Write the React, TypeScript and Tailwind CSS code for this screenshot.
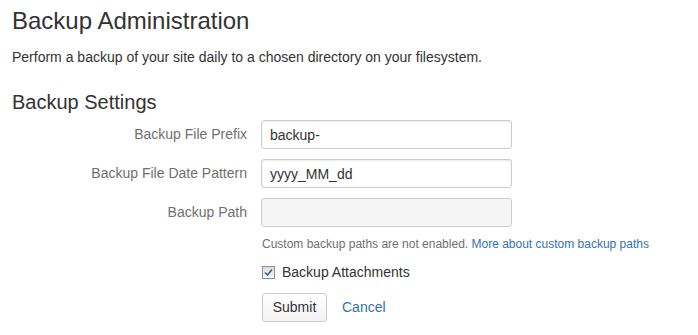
import { useState } from "react";

const fields = [
  { label: "Backup File Prefix", value: "backup-", disabled: false },
  { label: "Backup File Date Pattern", value: "yyyy_MM_dd", disabled: false },
  { label: "Backup Path", value: "", disabled: true },
];

export default function App() {
  const [attachments, setAttachments] = useState(true);

  return (
    <div className="w-[698px] h-[335px] bg-white px-3 pt-[6px] text-[#333] font-['Liberation_Sans',Arial,sans-serif]">
      <h1 className="text-[24px] leading-[30px]">Backup Administration</h1>
      <p className="mt-[11px] text-[14px] leading-5">
        Perform a backup of your site daily to a chosen directory on your filesystem.
      </p>

      <h2 className="mt-[23px] text-[20px] leading-6">Backup Settings</h2>

      <form className="mt-[6px] flex flex-col" onSubmit={(e) => e.preventDefault()}>
        {fields.map((f, i) => (
          <div key={f.label} className={i > 0 ? "mt-[10px] flex items-center" : "flex items-center"}>
            <label className="w-[236px] pr-[1px] text-right text-[14px] text-[#707070]">
              {f.label}
            </label>
            <input
              type="text"
              defaultValue={f.value}
              disabled={f.disabled}
              className={
                f.disabled
                  ? "ml-[13px] h-[29px] w-[251px] rounded-[3px] border border-[#ccc] bg-[#f5f5f5] px-2 text-[14px]"
                  : "ml-[13px] h-[29px] w-[251px] rounded-[3px] border border-[#ccc] bg-white px-2 text-[14px] text-[#333] shadow-[inset_0_1px_2px_rgba(0,0,0,0.08)]"
              }
            />
          </div>
        ))}

        <div className="ml-[250px] mt-[9px] text-[12px] leading-4 text-[#707070]">
          Custom backup paths are not enabled.{" "}
          <a href="#" className="text-[#3572b0]">
            More about custom backup paths
          </a>
        </div>

        <label className="ml-[250px] mt-[10px] flex items-center gap-[7px] text-[14px]">
          <input
            type="checkbox"
            checked={attachments}
            onChange={(e) => setAttachments(e.target.checked)}
            className="sr-only"
          />
          <span className="flex h-[13px] w-[13px] items-center justify-center border border-[#8e8f8f] bg-[linear-gradient(#dcdcdc,#fbfbfb)]">
            {attachments && (
              <svg width="9" height="9" viewBox="0 0 9 9">
                <path d="M1 4.5 L3.5 7 L8 1.5" fill="none" stroke="#3d5a9e" strokeWidth="1.6" />
              </svg>
            )}
          </span>
          Backup Attachments
        </label>

        <div className="ml-[250px] mt-[10px] flex items-center gap-[15px]">
          <button
            type="submit"
            className="h-[29px] w-[65px] rounded-[3px] border border-[#ccc] bg-[linear-gradient(#fff,#f2f2f2)] text-[14px] text-[#333]"
          >
            Submit
          </button>
          <a href="#" className="text-[14px] text-[#3572b0]">
            Cancel
          </a>
        </div>
      </form>
    </div>
  );
}
